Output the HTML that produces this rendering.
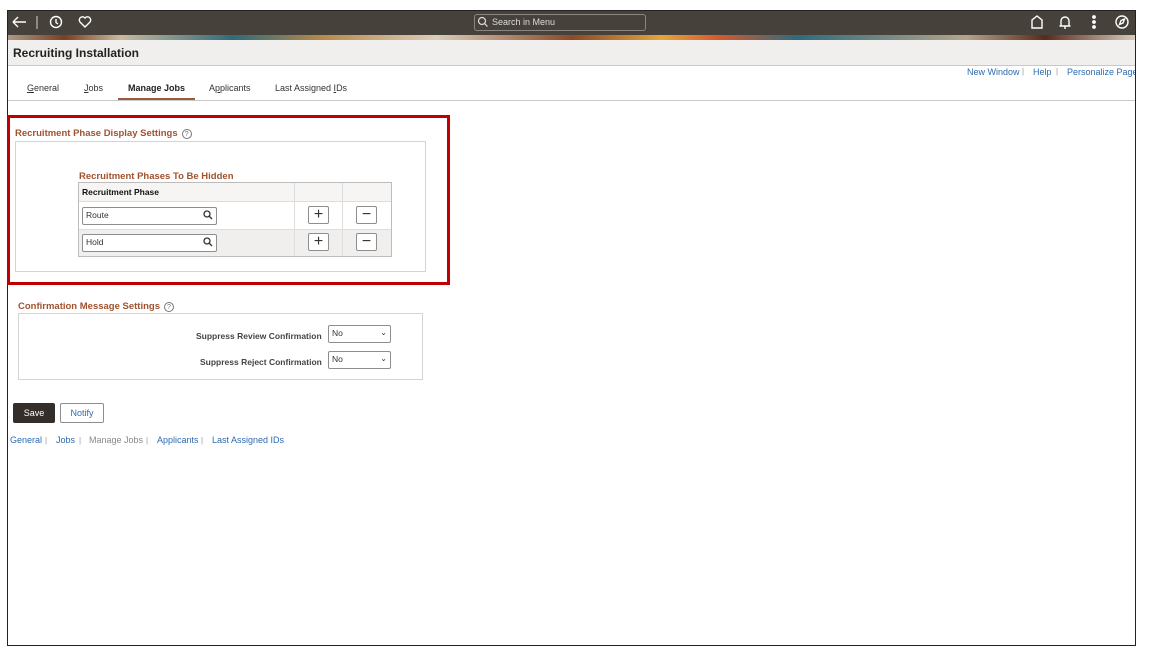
<!DOCTYPE html>
<html><head><style>
*{margin:0;padding:0;box-sizing:border-box}
body{width:1150px;height:661px;background:#fff;font-family:"Liberation Sans",Arial,sans-serif;position:relative;overflow:hidden}
.a{position:absolute}
.frame{left:7px;top:10px;width:1129px;height:636px;border:1px solid #222}
.top{left:8px;top:11px;width:1127px;height:25px;background:#46413b}
.banner{left:8px;top:35px;width:1127px;height:5px;background:linear-gradient(90deg,#a89b86 0,#7b3f21 5%,#c9b99e 10%,#2f6b7a 20%,#b88a4a 28%,#d9cdb9 38%,#8a4a28 50%,#e3a53d 58%,#d45a2e 63%,#2e6b7d 70%,#b3a48a 85%,#5a2a1a 92%,#d5cbbb 100%)}
.titlebar{left:8px;top:40px;width:1127px;height:26px;background:#f0efed;border-bottom:1px solid #c9c9c9}
.t{font-size:9px;color:#333}
.lnk{color:#2d6ab0;font-size:9px}
.brn{color:#a0522d;font-weight:bold;font-size:9.5px}
.box{border:1px solid #d4d4d4}
.inp{border:1px solid #8e8e8e;border-radius:2px;background:#fff;font-size:8.5px;color:#333;padding:2px 3px}
.btn{border:1px solid #8e8e8e;border-radius:2px;background:#fff;width:21px;height:18px;font-size:16px;line-height:15px;text-align:center;color:#333}
.sep{color:#999;font-size:8px}
.q{color:#777;font-weight:normal;border:1px solid #777;border-radius:50%;font-size:7px;display:inline-block;width:10px;height:10px;text-align:center;line-height:9px;margin-left:4px}
</style></head><body>
<div class="a frame"></div>
<div class="a top"></div>
<svg class="a" style="left:10px;top:13px" width="120" height="20" fill="none" stroke="#fff" stroke-width="1.4">
<path d="M3 9h13M3 9l5-5M3 9l5 5"/><path d="M27 3v13" stroke="#aaa"/>
<circle cx="46" cy="9" r="5.5"/><path d="M46 6v3.5l2 1.5"/>
<path d="M75 14l-5-5a3 3 0 0 1 5-4a3 3 0 0 1 5 4z"/></svg>
<div class="a" style="left:474px;top:14px;width:172px;height:17px;border:1px solid #8a8580;border-radius:3px;color:#ddd;font-size:9px;padding:2px 0 0 17px">Search in Menu</div>
<svg class="a" style="left:477px;top:16px" width="12" height="12" fill="none" stroke="#ddd" stroke-width="1.2"><circle cx="5" cy="5" r="3.5"/><path d="M7.5 7.5l3 3"/></svg>
<svg class="a" style="left:1028px;top:13px" width="110" height="20" fill="none" stroke="#fff" stroke-width="1.4">
<path d="M4 15V7l5-4 5 4v8z"/><path d="M33 13V8a4 4 0 0 1 8 0v5h1.5h-11zM37 13v3"/>
<circle cx="66" cy="4" r="1.2" fill="#fff"/><circle cx="66" cy="9" r="1.2" fill="#fff"/><circle cx="66" cy="14" r="1.2" fill="#fff"/>
<circle cx="94" cy="9" r="6"/><path d="M91.5 11.5l1.5-4 3.5-1.5-1.5 4z"/></svg>
<div class="a banner"></div>
<div class="a titlebar"></div>
<div class="a" style="left:13px;top:46px;font-size:12px;font-weight:bold;color:#222">Recruiting Installation</div>
<div class="a lnk" style="left:967px;top:67px">New Window</div>
<div class="a sep" style="left:1022px;top:67px">|</div>
<div class="a lnk" style="left:1033px;top:67px">Help</div>
<div class="a sep" style="left:1056px;top:67px">|</div>
<div class="a lnk" style="left:1067px;top:67px;width:68px;overflow:hidden;white-space:nowrap">Personalize Page</div>
<div class="a t" style="left:27px;top:83px"><u>G</u>eneral</div>
<div class="a t" style="left:84px;top:83px"><u>J</u>obs</div>
<div class="a t" style="left:128px;top:83px;font-weight:bold;color:#222">Manage Jobs</div>
<div class="a" style="left:118px;top:98px;width:77px;height:3px;background:#9c5b3a"></div>
<div class="a t" style="left:209px;top:83px">A<u>p</u>plicants</div>
<div class="a t" style="left:275px;top:83px">Last Assigned <u>I</u>Ds</div>
<div class="a" style="left:8px;top:100px;width:1127px;height:1px;background:#c9c9c9"></div>

<div class="a" style="left:7px;top:115px;width:443px;height:170px;border:3px solid #c00000"></div>
<div class="a brn" style="left:15px;top:128px">Recruitment Phase Display Settings<span class="q">?</span></div>
<div class="a box" style="left:15px;top:141px;width:411px;height:131px"></div>
<div class="a brn" style="left:79px;top:171px">Recruitment Phases To Be Hidden</div>
<div class="a" style="left:78px;top:182px;width:314px;height:75px;border:1px solid #bcbcbc;background:#fff"></div>
<div class="a" style="left:79px;top:183px;width:312px;height:19px;background:#f6f5f3;border-bottom:1px solid #ddd"></div>
<div class="a" style="left:79px;top:229px;width:312px;height:27px;background:#f0efed;border-top:1px solid #ddd"></div>
<div class="a" style="left:294px;top:183px;width:1px;height:73px;background:#ddd"></div>
<div class="a" style="left:342px;top:183px;width:1px;height:73px;background:#ddd"></div>
<div class="a" style="left:82px;top:187px;font-size:8.5px;font-weight:bold;color:#111">Recruitment Phase</div>
<div class="a inp" style="left:82px;top:207px;width:135px;height:18px">Route</div>
<div class="a inp" style="left:82px;top:234px;width:135px;height:18px">Hold</div>
<svg class="a" style="left:203px;top:210px" width="10" height="40" fill="none" stroke="#333" stroke-width="1.3"><circle cx="4" cy="4" r="3"/><path d="M6 6l3 3"/><circle cx="4" cy="31" r="3"/><path d="M6 33l3 3"/></svg>
<div class="a btn" style="left:308px;top:206px">+</div>
<div class="a btn" style="left:308px;top:233px">+</div>
<div class="a btn" style="left:356px;top:206px">−</div>
<div class="a btn" style="left:356px;top:233px">−</div>

<div class="a brn" style="left:18px;top:301px">Confirmation Message Settings<span class="q">?</span></div>
<div class="a box" style="left:18px;top:313px;width:405px;height:67px"></div>
<div class="a" style="left:196px;top:331px;font-size:8.5px;font-weight:bold;color:#444">Suppress Review Confirmation</div>
<div class="a" style="left:200px;top:357px;font-size:8.5px;font-weight:bold;color:#444">Suppress Reject Confirmation</div>
<div class="a inp" style="left:328px;top:325px;width:63px;height:18px">No<span style="float:right;font-size:8px">⌄</span></div>
<div class="a inp" style="left:328px;top:351px;width:63px;height:18px">No<span style="float:right;font-size:8px">⌄</span></div>

<div class="a" style="left:13px;top:403px;width:42px;height:20px;background:#332e2a;border-radius:2px;color:#fff;font-size:9px;text-align:center;line-height:20px">Save</div>
<div class="a" style="left:60px;top:403px;width:44px;height:20px;border:1px solid #8e8e8e;border-radius:2px;color:#2d6ab0;font-size:9px;text-align:center;line-height:18px">Notify</div>
<div class="a lnk" style="left:10px;top:435px">General</div>
<div class="a sep" style="left:45px;top:436px">|</div>
<div class="a lnk" style="left:56px;top:435px">Jobs</div>
<div class="a sep" style="left:79px;top:436px">|</div>
<div class="a" style="left:89px;top:435px;font-size:9px;color:#888">Manage Jobs</div>
<div class="a sep" style="left:146px;top:436px">|</div>
<div class="a lnk" style="left:157px;top:435px">Applicants</div>
<div class="a sep" style="left:201px;top:436px">|</div>
<div class="a lnk" style="left:212px;top:435px">Last Assigned IDs</div>
</body></html>
